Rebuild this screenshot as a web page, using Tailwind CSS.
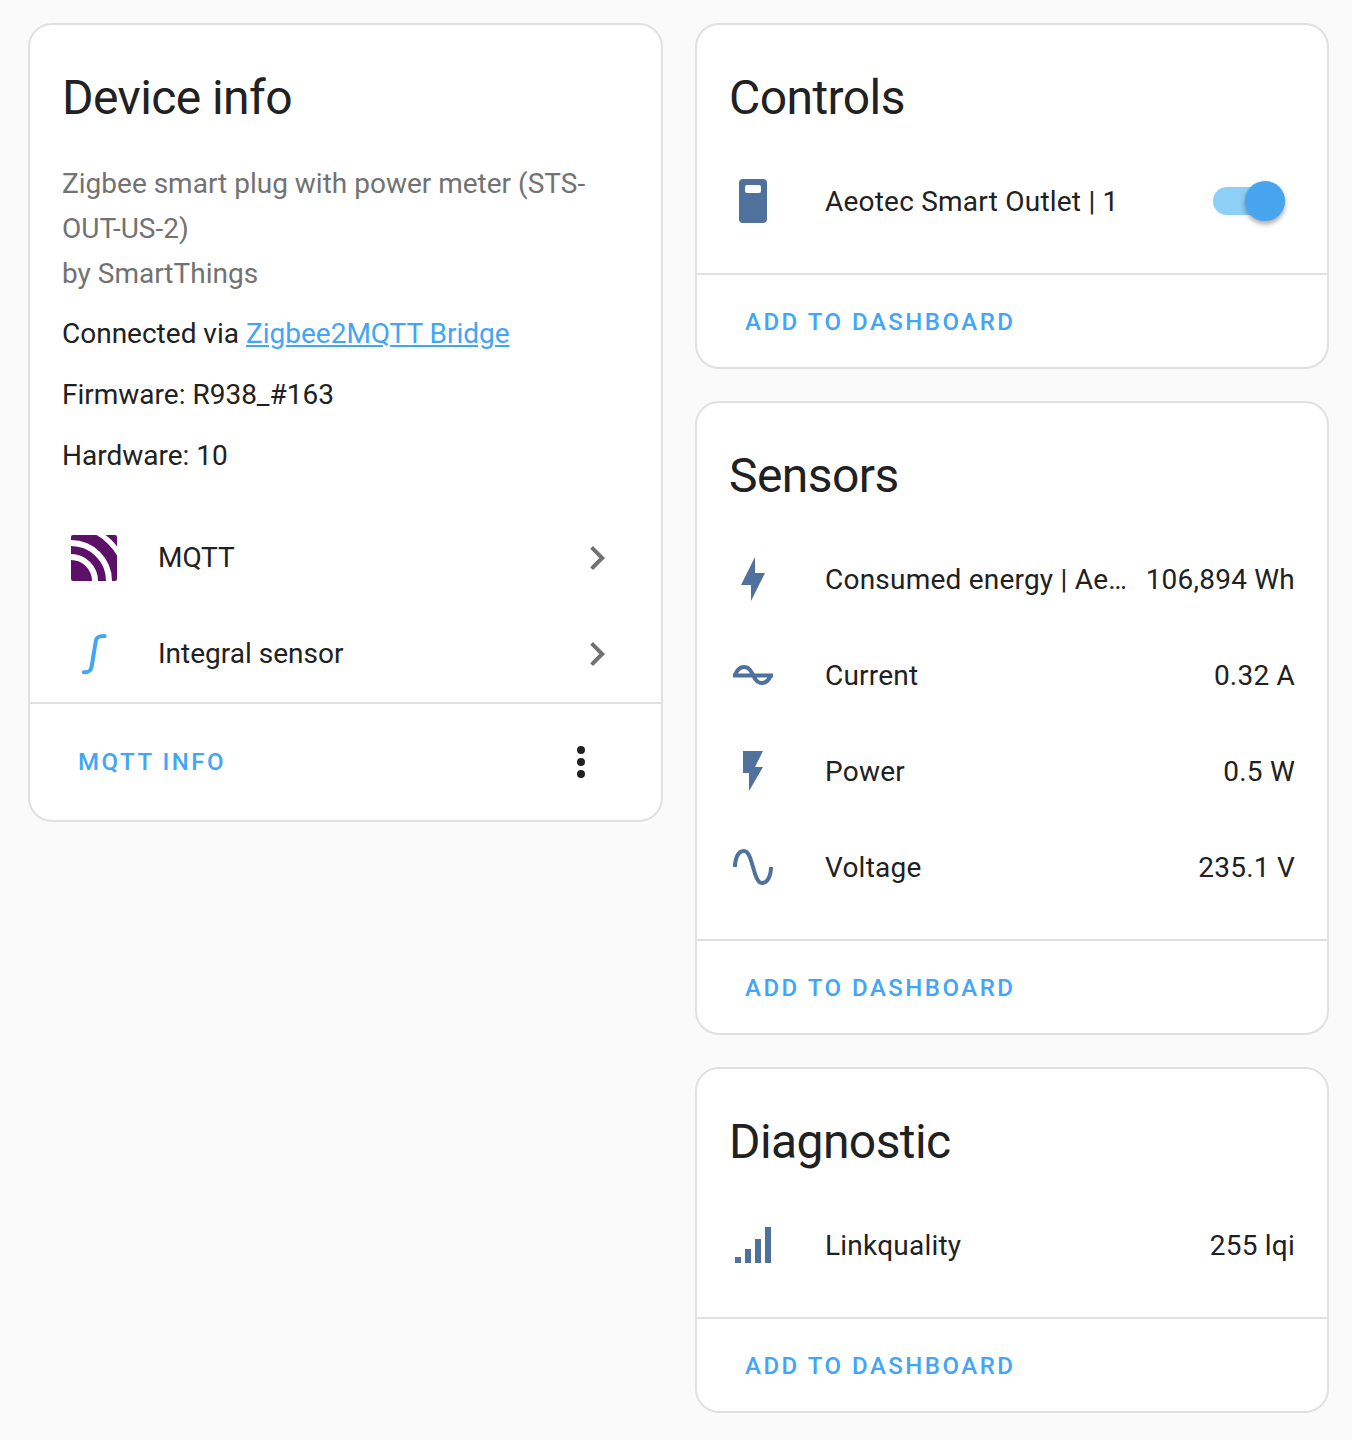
<!DOCTYPE html>
<html lang="en">
<head>
    <meta charset="UTF-8">
    <meta name="viewport" content="width=device-width, initial-scale=1.0">
    <script src="https://cdn.jsdelivr.net/npm/@tailwindcss/browser@4"></script>
    <title>Device page</title>
</head>
<body class="bg-[#fafafa] font-['Roboto',sans-serif] text-[#212121] text-[28px] leading-[45px]">

    <div class="w-[1352px] h-[1440px] grid grid-cols-[635px_634px] gap-x-[32px] items-start pl-[28px] pt-[23px]">

        <!-- left column -->
        <div class="bg-white border-2 border-[#e0e0e0] rounded-[24px] flex flex-col">
            <h1 class="text-[48px] tracking-[-0.576px] leading-[64px] pt-[41px] px-[32px]">Device info</h1>

            <div class="px-[32px] pt-[31px]">
                <div class="text-[#727272]">Zigbee smart plug with power meter (STS-<br>OUT-US-2)<br>by SmartThings</div>
                <div class="mt-[15px]">Connected via <a class="text-[#42a5f5] underline" href="#">Zigbee2MQTT Bridge</a></div>
                <div class="mt-[16px]">Firmware: R938_#163</div>
                <div class="mt-[16px]">Hardware: 10</div>
            </div>

            <div class="mt-[31px] mb-[1px]">
                <div class="h-[96px] flex items-center pl-[40px] pr-[40px]">
                    <svg class="w-[48px] h-[48px] shrink-0 mt-[2px]" viewBox="-1 -1 48 48">
                        <defs><clipPath id="mqttClip"><rect width="46" height="46" rx="2"/></clipPath></defs>
                        <rect width="46" height="46" rx="2" fill="#5c1068"/>
                        <g clip-path="url(#mqttClip)" fill="none" stroke="#fff">
                            <circle cx="0" cy="46" r="24" stroke-width="6"/>
                            <circle cx="0" cy="46" r="38" stroke-width="6"/>
                            <circle cx="0" cy="46" r="55" stroke-width="5"/>
                        </g>
                    </svg>
                    <div class="ml-[40px] flex-1">MQTT</div>
                    <svg class="w-[48px] h-[48px] fill-[#727272] shrink-0 mt-[2px]" viewBox="0 0 24 24"><path d="M8.59,16.58L13.17,12L8.59,7.41L10,6L16,12L10,18L8.59,16.58Z"/></svg>
                </div>
                <div class="h-[96px] flex items-center pl-[40px] pr-[40px]">
                    <svg class="w-[48px] h-[48px] shrink-0" viewBox="0 0 24 24" fill="none" stroke="#42a5f5" stroke-width="2" stroke-linecap="round"><path d="M17.3 3.5C14.5 3.3 13.3 3.9 12.9 6L10.8 18.8C10.4 21 9.5 21.8 6.9 21.6"/></svg>
                    <div class="ml-[40px] flex-1">Integral sensor</div>
                    <svg class="w-[48px] h-[48px] fill-[#727272] shrink-0 mt-[2px]" viewBox="0 0 24 24"><path d="M8.59,16.58L13.17,12L8.59,7.41L10,6L16,12L10,18L8.59,16.58Z"/></svg>
                </div>
            </div>

            <div class="border-t-2 border-[#e0e0e0] h-[118px] flex items-center justify-between pl-[48px] pr-[56px]">
                <span class="text-[24px] font-medium tracking-[2.5px] text-[#42a5f5]">MQTT INFO</span>
                <svg class="w-[48px] h-[48px] fill-[#212121]" viewBox="0 0 24 24"><path d="M12,16A2,2 0 0,1 14,18A2,2 0 0,1 12,20A2,2 0 0,1 10,18A2,2 0 0,1 12,16M12,10A2,2 0 0,1 14,12A2,2 0 0,1 12,14A2,2 0 0,1 10,12A2,2 0 0,1 12,10M12,4A2,2 0 0,1 14,6A2,2 0 0,1 12,8A2,2 0 0,1 10,6A2,2 0 0,1 12,4Z"/></svg>
            </div>
        </div>

        <!-- right column -->
        <div class="flex flex-col gap-[32px] tracking-[0.22px]">

            <div class="bg-white border-2 border-[#e0e0e0] rounded-[24px]">
                <h2 class="text-[48px] tracking-[-0.576px] leading-[64px] pt-[41px] px-[32px] pb-[23px]">Controls</h2>
                <div class="h-[96px] flex items-center pl-[32px] pr-[42px]">
                    <svg class="w-[48px] h-[48px] fill-[#4e729b] shrink-0" viewBox="0 0 24 24"><path fill-rule="evenodd" d="M7 1H17A2 2 0 0 1 19 3V21A2 2 0 0 1 17 23H7A2 2 0 0 1 5 21V3A2 2 0 0 1 7 1ZM9 4A1 1 0 0 0 8 5V7A1 1 0 0 0 9 8H15A1 1 0 0 0 16 7V5A1 1 0 0 0 15 4Z"/></svg>
                    <div class="ml-[48px] flex-1">Aeotec Smart Outlet | 1</div>
                    <div class="relative w-[72px] h-[28px] rounded-full bg-[#8ecff5]">
                        <div class="absolute right-0 top-[-6px] w-[40px] h-[40px] rounded-full bg-[#47a5ef] shadow-[0_3px_5px_rgba(0,0,0,0.35)]"></div>
                    </div>
                </div>
                <div class="mt-[24px] border-t-2 border-[#e0e0e0] h-[94px] flex items-center pl-[48px] pt-[2px]">
                    <span class="text-[24px] font-medium tracking-[2.5px] text-[#42a5f5]">ADD TO DASHBOARD</span>
                </div>
            </div>

            <div class="bg-white border-2 border-[#e0e0e0] rounded-[24px]">
                <h2 class="text-[48px] tracking-[-0.576px] leading-[64px] pt-[41px] px-[32px] pb-[23px]">Sensors</h2>
                <div class="h-[96px] flex items-center px-[32px]">
                    <svg class="w-[48px] h-[48px] fill-[#4e729b] shrink-0" viewBox="0 0 24 24"><path d="M11 15H6L13 1V9H18L11 23V15Z"/></svg>
                    <div class="ml-[48px] flex-1">Consumed energy | Ae…</div>
                    <div class="shrink-0">106,894 Wh</div>
                </div>
                <div class="h-[96px] flex items-center px-[32px]">
                    <svg class="w-[48px] h-[48px] shrink-0" viewBox="0 0 24 24" fill="none" stroke="#4e729b" stroke-width="2"><path d="M2 12.2H22M3 12C4 9.5 5.6 8 7.5 8C10 8 11 10 12 12C13 14 14 16 16.5 16C18.4 16 20 14.5 21 12"/></svg>
                    <div class="ml-[48px] flex-1">Current</div>
                    <div>0.32 A</div>
                </div>
                <div class="h-[96px] flex items-center px-[32px]">
                    <svg class="w-[48px] h-[48px] fill-[#4e729b] shrink-0" viewBox="0 0 24 24"><path d="M7,2V13H10V22L17,10H13L17,2H7Z"/></svg>
                    <div class="ml-[48px] flex-1">Power</div>
                    <div>0.5 W</div>
                </div>
                <div class="h-[96px] flex items-center px-[32px]">
                    <svg class="w-[48px] h-[48px] fill-[#4e729b] shrink-0" viewBox="0 0 24 24"><path d="M16.5,21C13.5,21 12.31,16.76 11.05,12.28C10.14,9.04 9,5 7.5,5C4.11,5 4,11.93 4,12H2C2,11.63 2.06,3 7.5,3C10.5,3 11.71,7.25 12.97,11.74C13.83,14.8 15,19 16.5,19C19.94,19 20.03,12.07 20.03,12H22.03C22.03,12.37 21.97,21 16.5,21Z"/></svg>
                    <div class="ml-[48px] flex-1">Voltage</div>
                    <div>235.1 V</div>
                </div>
                <div class="mt-[24px] border-t-2 border-[#e0e0e0] h-[94px] flex items-center pl-[48px] pt-[2px]">
                    <span class="text-[24px] font-medium tracking-[2.5px] text-[#42a5f5]">ADD TO DASHBOARD</span>
                </div>
            </div>

            <div class="bg-white border-2 border-[#e0e0e0] rounded-[24px]">
                <h2 class="text-[48px] tracking-[-0.576px] leading-[64px] pt-[41px] px-[32px] pb-[23px]">Diagnostic</h2>
                <div class="h-[96px] flex items-center px-[32px]">
                    <svg class="w-[48px] h-[48px] fill-[#4e729b] shrink-0" viewBox="0 0 24 24"><path d="M3,21H6V18H3M8,21H11V14H8M13,21H16V9H13M18,21H21V3H18V21Z"/></svg>
                    <div class="ml-[48px] flex-1">Linkquality</div>
                    <div>255 lqi</div>
                </div>
                <div class="mt-[24px] border-t-2 border-[#e0e0e0] h-[94px] flex items-center pl-[48px] pt-[2px]">
                    <span class="text-[24px] font-medium tracking-[2.5px] text-[#42a5f5]">ADD TO DASHBOARD</span>
                </div>
            </div>

        </div>
    </div>

</body>
</html>
